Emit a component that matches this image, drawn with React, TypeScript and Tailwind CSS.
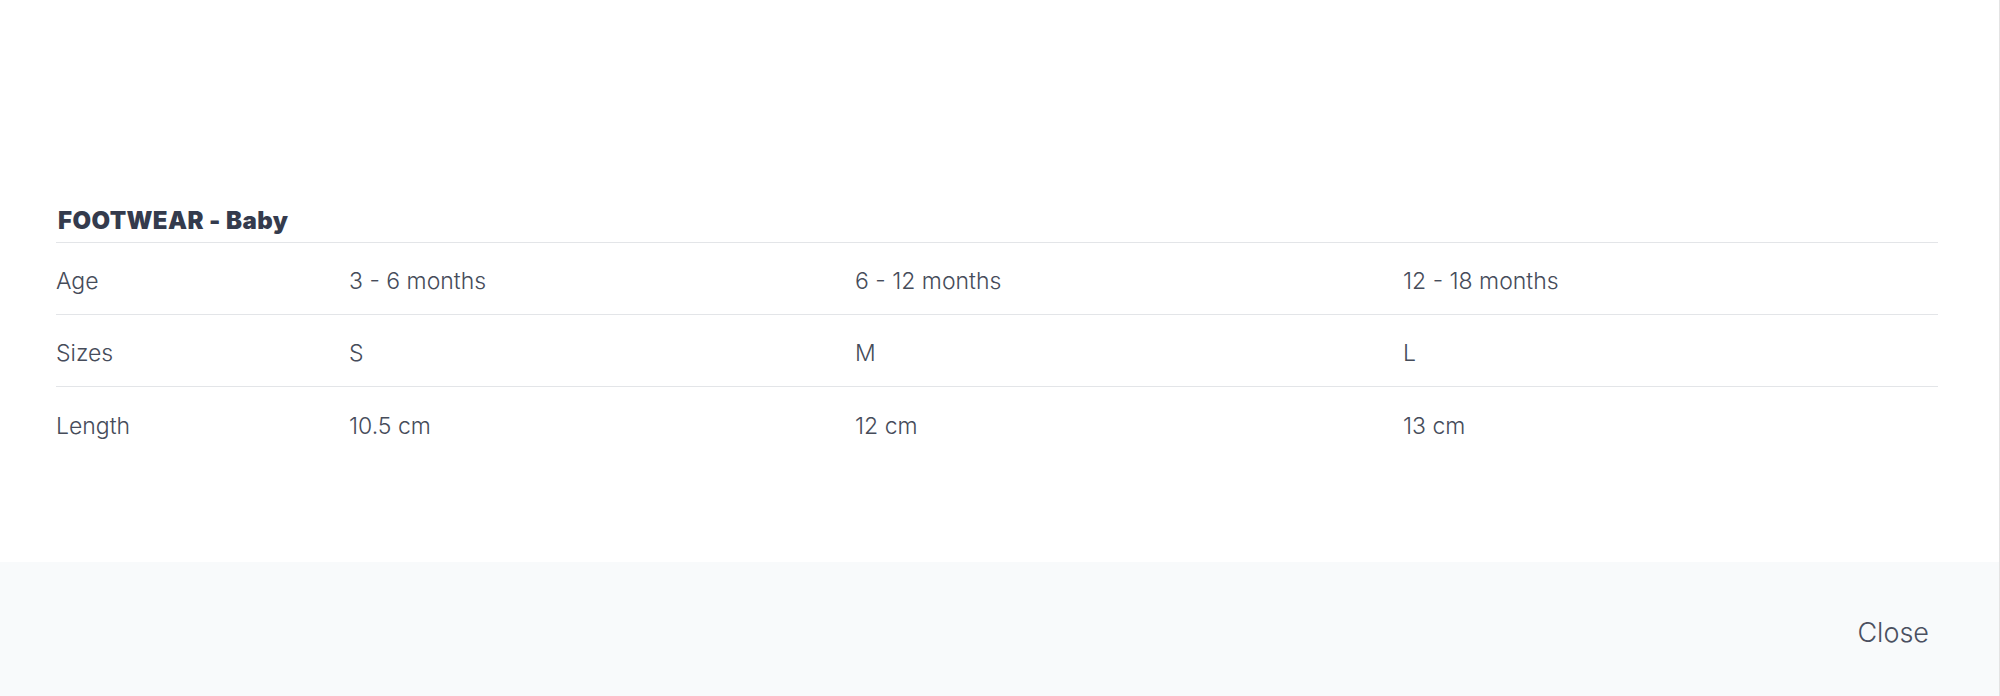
const rows = [
  { label: "Age", values: ["3 - 6 months", "6 - 12 months", "12 - 18 months"] },
  { label: "Sizes", values: ["S", "M", "L"] },
  { label: "Length", values: ["10.5 cm", "12 cm", "13 cm"] },
];

export default function App() {
  return (
    <div className="flex h-[696px] w-[2000px] bg-[#f7f7f7] font-['Inter',sans-serif]">
      <div className="flex flex-1 flex-col bg-white border-r border-[#e3e3e3]">
        {/* Table */}
        <div className="flex-1 pl-[56px] pr-[61px] pt-[207px]">
          <div className="h-[36px] border-b border-[#e3e5e8] pl-[2px]">
            <h2 className="text-[24px] leading-[28px] font-black tracking-[0.4px] text-[#343b4d]">
              FOOTWEAR - Baby
            </h2>
          </div>
          {rows.map((r, i) => (
            <div
              key={r.label}
              className={`grid h-[72px] grid-cols-[293px_506px_548px_1fr] items-center pt-[6px] text-[23px] font-light text-[#464c5a] ${
                i < rows.length - 1 ? "border-b border-[#e3e5e8]" : ""
              }`}
            >
              <span>{r.label}</span>
              {r.values.map((v) => (
                <span key={v}>{v}</span>
              ))}
            </div>
          ))}
        </div>

        {/* Footer */}
        <div className="flex h-[134px] items-center justify-end bg-[#f8fafb] pr-[70px] pt-[8px]">
          <button className="text-[27px] font-light text-[#4a5060]">Close</button>
        </div>
      </div>
    </div>
  );
}
